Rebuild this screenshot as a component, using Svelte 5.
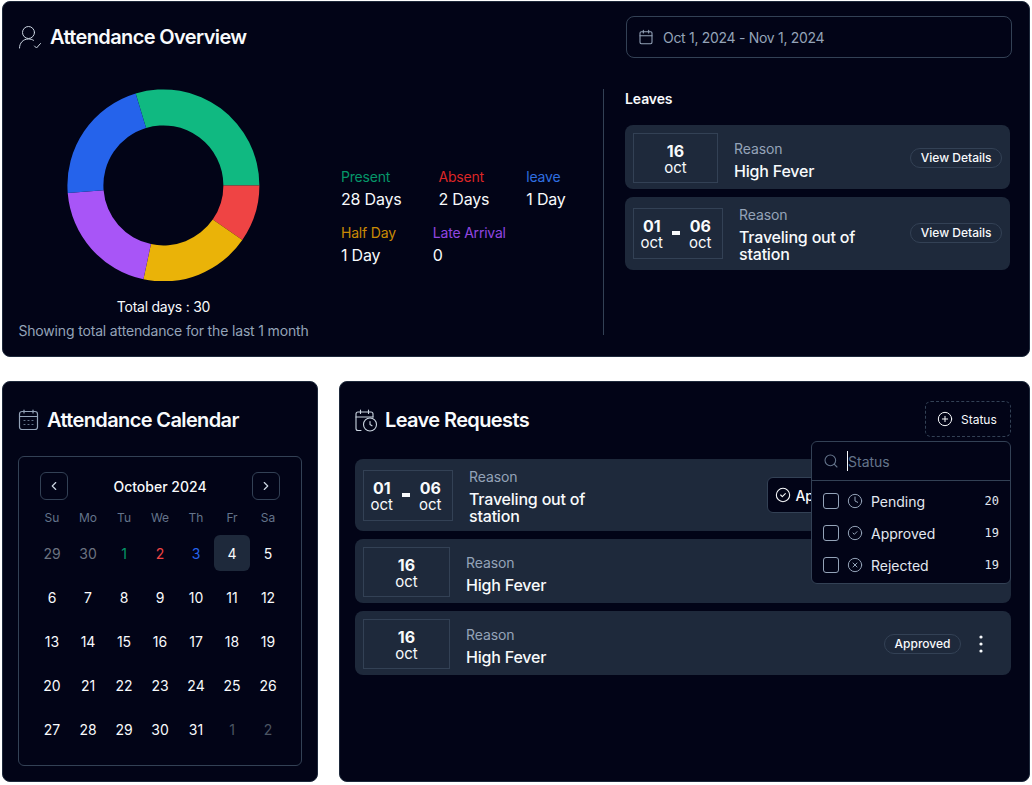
<script>
  const R = 96, r = 60, C = 96.4;
  const pt = (rad, deg) => {
    const a = (deg * Math.PI) / 180;
    return `${(C + rad * Math.cos(a)).toFixed(2)} ${(C + rad * Math.sin(a)).toFixed(2)}`;
  };
  const arc = (a, b) => {
    const large = b - a > 180 ? 1 : 0;
    return `M${pt(R, a)}A${R} ${R} 0 ${large} 1 ${pt(R, b)}L${pt(r, b)}A${r} ${r} 0 ${large} 0 ${pt(r, a)}Z`;
  };
  const slices = [
    { c: '#10b981', a: -106.8, b: 0 },
    { c: '#ef4444', a: 0, b: 34.7 },
    { c: '#eab308', a: 34.7, b: 102 },
    { c: '#a855f7', a: 102, b: 175.4 },
    { c: '#2563eb', a: 175.4, b: 253.2 }
  ];
  const legend = [
    { l: 'Present', v: '28 Days', k: 'green' },
    { l: 'Absent', v: '2 Days', k: 'red' },
    { l: 'leave', v: '1 Day', k: 'blue' },
    { l: 'Half Day', v: '1 Day', k: 'yellow' },
    { l: 'Late Arrival', v: '0', k: 'purple' }
  ];
  const week = ['Su', 'Mo', 'Tu', 'We', 'Th', 'Fr', 'Sa'];
  const days = [
    { d: 29, k: 'out' }, { d: 30, k: 'out' }, { d: 1, k: 'green' }, { d: 2, k: 'red' }, { d: 3, k: 'blue' }, { d: 4, k: 'sel' }, { d: 5 },
    ...Array.from({ length: 26 }, (_, i) => ({ d: i + 6 })),
    { d: 1, k: 'faint' }, { d: 2, k: 'faint' }
  ];
  const options = [
    { l: 'Pending', n: 20, i: 'clock' },
    { l: 'Approved', n: 19, i: 'check' },
    { l: 'Rejected', n: 19, i: 'x' }
  ];
</script>

{#snippet single()}
  <div class="datebox one">
    <div class="dcol"><b>16</b><span>oct</span></div>
  </div>
{/snippet}

{#snippet range()}
  <div class="datebox two">
    <div class="dcol"><b>01</b><span>oct</span></div>
    <i class="dash"></i>
    <div class="dcol"><b>06</b><span>oct</span></div>
  </div>
{/snippet}

{#snippet reason(text, narrow)}
  <div class="reason" class:narrow>
    <span>Reason</span>
    <p>{text}</p>
  </div>
{/snippet}

{#snippet kebab()}
  <svg class="kebab" width="16" height="20" viewBox="0 0 16 20" fill="#f8fafc"><circle cx="8" cy="3" r="1.600"/><circle cx="8" cy="10" r="1.600"/><circle cx="8" cy="17" r="1.600"/></svg>
{/snippet}

<div class="page">
  <section class="card overview">
    <header class="head">
      <div class="title">
        <svg width="24" height="24" viewBox="0 0 24 24" fill="none" stroke="#cbd5e1" stroke-width="1" stroke-linecap="round" stroke-linejoin="round">
          <circle cx="10.500" cy="7.500" r="6"/>
          <path d="M1.500 23c0-5 3.500-9 9-9 2 0 3.500.4 5 1.300"/>
          <path d="M16.500 21l2 2 4-4.500"/>
        </svg>
        <h2>Attendance Overview</h2>
      </div>
      <div class="range">
        <svg width="16" height="16" viewBox="0 0 24 24" fill="none" stroke="#94a3b8" stroke-width="1.600" stroke-linecap="round" stroke-linejoin="round"><path d="M8 2v4M16 2v4"/><rect x="3" y="4" width="18" height="18" rx="2"/><path d="M3 10h18"/></svg>
        <span>Oct 1, 2024 - Nov 1, 2024</span>
      </div>
    </header>

    <div class="overview-body">
      <div class="chart">
        <svg width="193" height="192" viewBox="0 0 193 192">
          {#each slices as s}
            <path d={arc(s.a, s.b)} fill={s.c}/>
          {/each}
        </svg>
        <div class="total">Total days : 30</div>
        <div class="showing">Showing total attendance for the last 1 month</div>
      </div>

      <div class="legend">
        {#each legend as it}
          <div class="legend-item">
            <span class={it.k}>{it.l}</span>
            <strong>{it.v}</strong>
          </div>
        {/each}
      </div>

      <div class="leaves">
        <h3>Leaves</h3>
        <div class="rows">
          <div class="row">
            {@render single()}
            {@render reason('High Fever', false)}
            <button class="pill">View Details</button>
          </div>
          <div class="row tall">
            {@render range()}
            {@render reason('Traveling out of station', true)}
            <button class="pill">View Details</button>
          </div>
        </div>
      </div>
    </div>
  </section>

  <div class="bottom">
    <section class="card calendar-card">
      <div class="title small">
        <svg width="22" height="22" viewBox="0 0 22 22" fill="none" stroke="#94a3b8" stroke-width="1.200" stroke-linecap="round" stroke-linejoin="round">
          <rect x="1.500" y="2.500" width="18" height="18" rx="2.500"/>
          <path d="M1.500 7.500h18M6 1v3M15 1v3"/>
          <path d="M6 11.500h1M10 11.500h1M14 11.500h1M6 15.500h1M10 15.500h1M14 15.500h1" stroke="#64748b"/>
        </svg>
        <h2>Attendance Calendar</h2>
      </div>
      <div class="calendar">
        <div class="cal-head">
          <button class="nav" aria-label="Previous"><svg width="14" height="14" viewBox="0 0 24 24" fill="none" stroke="#cbd5e1" stroke-width="2" stroke-linecap="round" stroke-linejoin="round"><path d="m15 18-6-6 6-6"/></svg></button>
          <span>October 2024</span>
          <button class="nav" aria-label="Next"><svg width="14" height="14" viewBox="0 0 24 24" fill="none" stroke="#cbd5e1" stroke-width="2" stroke-linecap="round" stroke-linejoin="round"><path d="m9 18 6-6-6-6"/></svg></button>
        </div>
        <div class="week">
          {#each week as w}<span>{w}</span>{/each}
        </div>
        <div class="days">
          {#each days as day}
            <span class="day {day.k ?? ''}">{day.d}</span>
          {/each}
        </div>
      </div>
    </section>

    <section class="card requests">
      <header class="req-head">
        <div class="title small">
          <svg width="23" height="23" viewBox="0 0 23 23" fill="none" stroke="#cbd5e1" stroke-width="1.100" stroke-linecap="round" stroke-linejoin="round">
            <path d="M6 21.500H3a2 2 0 0 1-2-2V5a2 2 0 0 1 2-2h13a2 2 0 0 1 2 2v3"/>
            <path d="M1 8h17M5.500 1v3.500M13.500 1v3.500"/>
            <circle cx="15" cy="15.500" r="6.500"/>
            <path d="M15 12.500v3l2 1.300"/>
          </svg>
          <h2>Leave Requests</h2>
        </div>
        <button class="status-btn">
          <svg width="16" height="16" viewBox="0 0 24 24" fill="none" stroke="#f8fafc" stroke-width="1.500" stroke-linecap="round" stroke-linejoin="round"><circle cx="12" cy="12" r="10"/><path d="M12 8v8M8 12h8"/></svg>
          <span>Status</span>
        </button>
      </header>

      <div class="rows req-rows">
        <div class="row tall">
          {@render range()}
          {@render reason('Traveling out of station', true)}
          <button class="approve">
            <svg width="16" height="16" viewBox="0 0 24 24" fill="none" stroke="#f8fafc" stroke-width="1.600" stroke-linecap="round" stroke-linejoin="round"><circle cx="12" cy="12" r="10"/><path d="m8.500 12 2.500 2.500 4.500-4.500"/></svg>
            Approve
          </button>
        </div>
        <div class="row">
          {@render single()}
          {@render reason('High Fever', false)}
          <span class="pill">Approved</span>
          {@render kebab()}
        </div>
        <div class="row">
          {@render single()}
          {@render reason('High Fever', false)}
          <span class="pill">Approved</span>
          {@render kebab()}
        </div>
      </div>

      <div class="popover">
        <div class="search">
          <svg width="16" height="16" viewBox="0 0 24 24" fill="none" stroke="#64748b" stroke-width="1.600" stroke-linecap="round" stroke-linejoin="round"><circle cx="11" cy="11" r="8"/><path d="m21 21-4.300-4.300"/></svg>
          <span class="caret"></span>
          <span class="placeholder">Status</span>
        </div>
        <ul>
          {#each options as o}
            <li>
              <span class="check"></span>
              <svg width="16" height="16" viewBox="0 0 24 24" fill="none" stroke="#94a3b8" stroke-width="1.500" stroke-linecap="round" stroke-linejoin="round">
                <circle cx="12" cy="12" r="10"/>
                {#if o.i === 'clock'}<path d="M12 6v6l4 2"/>
                {:else if o.i === 'check'}<path d="m9 12 2 2 4-4"/>
                {:else}<path d="m15 9-6 6M9 9l6 6"/>{/if}
              </svg>
              <span class="opt">{o.l}</span>
              <span class="num">{o.n}</span>
            </li>
          {/each}
        </ul>
      </div>
    </section>
  </div>
</div>

<style>
  :global(body) { background: #fff; }
  * { box-sizing: border-box; }
  .page {
    width: 1032px;
    padding: 1px 2px 0;
    font-family: Inter, "Liberation Sans", sans-serif;
    color: #f8fafc;
  }
  .card {
    background: #020417;
    border: 1px solid #1e293b;
    border-radius: 8px;
  }
  h2, h3, p, ul { margin: 0; padding: 0; }
  button { font-family: inherit; cursor: pointer; }

  .overview { height: 356px; padding: 14px 17px 0 15px; }
  .head { display: flex; justify-content: space-between; align-items: center; height: 42px; }
  .title { display: flex; align-items: center; gap: 8px; }
  .title h2 { font-size: 20px; font-weight: 600; letter-spacing: -0.62px; white-space: nowrap; }
  .range {
    width: 386px; height: 42px;
    border: 1px solid #334155; border-radius: 8px;
    display: flex; align-items: center; gap: 9px; padding: 0 11px;
    font-size: 14px; color: #94a3b8; letter-spacing: -0.3px;
  }
  .overview-body { display: flex; margin-top: 31px; }
  .chart { width: 291px; display: flex; flex-direction: column; align-items: center; }
  .chart svg { display: block; }
  .total { margin-top: 16px; font-size: 14px; line-height: 20px; letter-spacing: -0.25px; }
  .showing { margin-top: 4px; font-size: 14px; line-height: 20px; color: #94a3b8; white-space: nowrap; letter-spacing: -0.16px; }

  .legend {
    width: 262px; margin-left: 32px; padding-top: 78px;
    display: flex; flex-wrap: wrap; column-gap: 37px; row-gap: 13px; align-content: flex-start;
  }
  .legend-item { display: flex; flex-direction: column; gap: 1px; }
  .legend-item span { font-size: 14px; line-height: 20px; letter-spacing: -0.2px; }
  .legend-item strong { font-size: 16px; font-weight: 400; line-height: 22px; letter-spacing: -0.2px; }
  .legend-item .green { color: #059669; }
  .legend-item .red { color: #dc2626; }
  .legend-item .blue { color: #2f6fe0; }
  .legend-item .yellow { color: #ca8a04; }
  .legend-item .purple { color: #9146e0; }

  .leaves { flex: 1; border-left: 1px solid #334155; height: 246px; padding: 0 2px 0 21px; min-width: 0; }
  .leaves h3 { font-size: 14px; font-weight: 600; line-height: 20px; letter-spacing: -0.1px; }
  .leaves .rows { margin-top: 16px; }
  .rows { display: flex; flex-direction: column; gap: 8px; }
  .row {
    background: #1e293b; border-radius: 8px; padding: 8px 8px 6px;
    display: flex; align-items: center; gap: 16px;
  }
  .datebox {
    height: 50px; border: 1px solid #334155; display: flex; align-items: center; justify-content: center; flex: none;
  }
  .datebox.one { width: 85px; }
  .req-rows .datebox.one { width: 87px; }
  .datebox.two { width: 90px; gap: 9px; height: 51px; padding-right: 4px; }
  .row.tall .datebox, .row.tall .pill, .row.tall .approve { margin-bottom: 3px; }
  .dcol { display: flex; flex-direction: column; align-items: center; margin-top: 2px; }
  .dcol b { font-size: 16px; line-height: 17px; font-weight: 700; }
  .dcol span { font-size: 15px; line-height: 16px; }
  .dash { display: block; width: 8px; height: 4px; background: #f8fafc; }
  .reason { flex: 1; min-width: 0; display: flex; flex-direction: column; gap: 4px; margin-top: 4px; }
  .reason.narrow { margin-top: 0; }
  .reason span { font-size: 14px; line-height: 20px; color: #94a3b8; letter-spacing: -0.1px; }
  .reason p { font-size: 16px; line-height: 17px; font-weight: 450; padding-bottom: 1px; letter-spacing: -0.2px; }
  .reason.narrow p { max-width: 150px; }
  .pill {
    height: 20px; padding: 0 9.5px; border-radius: 10px;
    border: 1px solid #334155; background: transparent; color: #f8fafc;
    font-size: 12px; font-weight: 500; line-height: 18px; flex: none; display: inline-flex; align-items: center;
  }

  .bottom { display: grid; grid-template-columns: 316px 691px; column-gap: 21px; margin-top: 24px; }
  .calendar-card { height: 401px; padding: 26px 15px 0; }
  .title.small { height: 24px; gap: 7px; }
  .calendar {
    margin-top: 24px; height: 310px; border: 1px solid #334155; border-radius: 6px; padding: 15px;
  }
  .cal-head { display: flex; justify-content: space-between; align-items: center; margin: 0 6px; font-size: 14px; font-weight: 500; }
  .nav {
    width: 28px; height: 28px; border: 1px solid #334155; border-radius: 6px; background: transparent;
    display: flex; align-items: center; justify-content: center; padding: 0;
  }
  .week { display: grid; grid-template-columns: repeat(7, 36px); margin-top: 9px; font-size: 12px; line-height: 18px; color: #64748b; text-align: center; }
  .days { display: grid; grid-template-columns: repeat(7, 36px); grid-auto-rows: 36px; row-gap: 8px; margin-top: 8px; }
  .day { display: flex; align-items: center; justify-content: center; font-size: 14px; border-radius: 6px; }
  .day.out { color: #6b7280; }
  .day.faint { color: #4b5563; }
  .day.green { color: #059669; }
  .day.red { color: #ef4444; }
  .day.blue { color: #2563eb; }
  .day.sel { background: #1e293b; }

  .requests { position: relative; height: 401px; padding: 19px 18px 0 15px; }
  .req-head { display: flex; justify-content: space-between; align-items: center; height: 36px; }
  .req-head .title { margin-top: 2px; }
  .status-btn {
    width: 86px; height: 36px; border: 1px dashed #334155; border-radius: 6px; background: transparent;
    color: #f8fafc; font-size: 12px; font-weight: 400;
    display: flex; align-items: center; gap: 8px; padding: 0 11px;
  }
  .req-rows { margin-top: 22px; }
  .req-rows .row.tall { padding-bottom: 5px; }
  .kebab { flex: none; margin: 0 14px 0 -4px; }
  .approve {
    height: 36px; border: 1px solid #334155; border-radius: 6px; background: #020417; color: #f8fafc;
    font-size: 14px; font-weight: 500; display: flex; align-items: center; gap: 4px; padding: 0 7px; margin-right: 143px; flex: none;
  }

  .popover {
    position: absolute; top: 59px; right: 18px; width: 200px; height: 143px;
    background: #020417; border: 1px solid #334155; border-radius: 6px;
  }
  .search {
    height: 39px; border-bottom: 1px solid #334155; display: flex; align-items: center; padding: 0 11px;
  }
  .caret { width: 1px; height: 20px; background: #f8fafc; margin-left: 8px; }
  .placeholder { font-size: 14px; color: #64748b; }
  .popover ul { list-style: none; padding-top: 4px; }
  .popover li { height: 32px; display: flex; align-items: center; padding: 0 11px; gap: 8px; }
  .check { width: 16px; height: 16px; border: 1px solid #94a3b8; border-radius: 3px; flex: none; }
  .opt { flex: 1; font-size: 14px; color: #e2e8f0; }
  .num { font-family: "DejaVu Sans Mono", monospace; font-size: 12px; color: #e2e8f0; }
</style>
